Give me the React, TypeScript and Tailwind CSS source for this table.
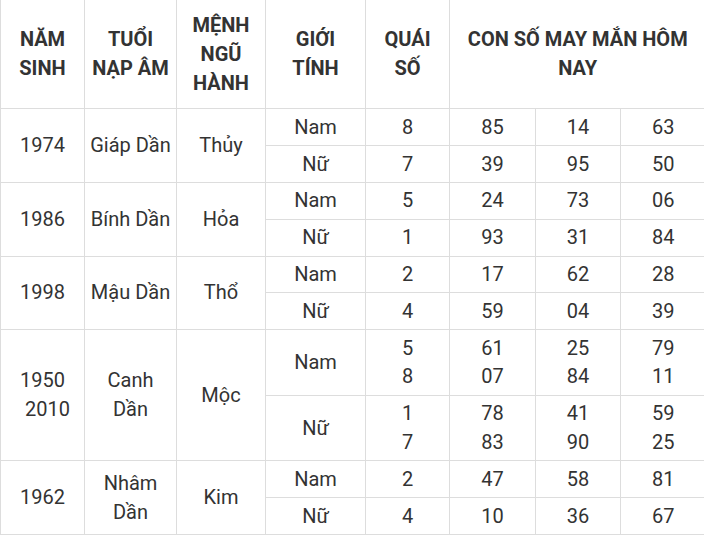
type Line = string[];

type Gender = {
  label: string;
  quai: Line;
  nums: [Line, Line, Line];
};

type Group = {
  year: Line;
  tuoi: Line;
  menh: string;
  nam: Gender;
  nu: Gender;
};

const groups: Group[] = [
  {
    year: ['1974'],
    tuoi: ['Giáp Dần'],
    menh: 'Thủy',
    nam: { label: 'Nam', quai: ['8'], nums: [['85'], ['14'], ['63']] },
    nu: { label: 'Nữ', quai: ['7'], nums: [['39'], ['95'], ['50']] },
  },
  {
    year: ['1986'],
    tuoi: ['Bính Dần'],
    menh: 'Hỏa',
    nam: { label: 'Nam', quai: ['5'], nums: [['24'], ['73'], ['06']] },
    nu: { label: 'Nữ', quai: ['1'], nums: [['93'], ['31'], ['84']] },
  },
  {
    year: ['1998'],
    tuoi: ['Mậu Dần'],
    menh: 'Thổ',
    nam: { label: 'Nam', quai: ['2'], nums: [['17'], ['62'], ['28']] },
    nu: { label: 'Nữ', quai: ['4'], nums: [['59'], ['04'], ['39']] },
  },
  {
    year: ['1950', '\u00a0\u00a02010'],
    tuoi: ['Canh', 'Dần'],
    menh: 'Mộc',
    nam: { label: 'Nam', quai: ['5', '8'], nums: [['61', '07'], ['25', '84'], ['79', '11']] },
    nu: { label: 'Nữ', quai: ['1', '7'], nums: [['78', '83'], ['41', '90'], ['59', '25']] },
  },
  {
    year: ['1962'],
    tuoi: ['Nhâm', 'Dần'],
    menh: 'Kim',
    nam: { label: 'Nam', quai: ['2'], nums: [['47'], ['58'], ['81']] },
    nu: { label: 'Nữ', quai: ['4'], nums: [['10'], ['36'], ['67']] },
  },
];

const headers: Line[] = [
  ['NĂM', 'SINH'],
  ['TUỔI', 'NẠP ÂM'],
  ['MỆNH', 'NGŨ', 'HÀNH'],
  ['GIỚI', 'TÍNH'],
  ['QUÁI', 'SỐ'],
];

function Lines({ lines }: { lines: Line }) {
  return (
    <>
      {lines.map((l, i) => (
        <span key={i} className="block whitespace-nowrap">
          {l}
        </span>
      ))}
    </>
  );
}

const td = 'border border-[#dddddd] px-0 py-[3.5px] text-center align-middle';
const th = 'border border-t-0 border-[#dddddd] px-0 pt-[11px] pb-[11px] text-center align-middle font-bold';

function GenderCells({ g }: { g: Gender }) {
  return (
    <>
      <td className={td}>{g.label}</td>
      <td className={td}>
        <Lines lines={g.quai} />
      </td>
      {g.nums.map((n, i) => (
        <td key={i} className={`${td} ${i === 2 ? 'border-r-0' : ''}`}>
          <Lines lines={n} />
        </td>
      ))}
    </>
  );
}

export default function App() {
  return (
    <div className="w-[704px] h-[535px] overflow-hidden bg-white">
      <table
        className="table-fixed border-collapse w-[705px] text-[20px] leading-[28.8px] text-[#333333]"
        style={{ fontFamily: 'Roboto, "Liberation Sans", sans-serif' }}
      >
        <colgroup>
          <col className="w-[84px]" />
          <col className="w-[92px]" />
          <col className="w-[89px]" />
          <col className="w-[100px]" />
          <col className="w-[84px]" />
          <col className="w-[86px]" />
          <col className="w-[85px]" />
          <col className="w-[85px]" />
        </colgroup>
        <thead>
          <tr>
            {headers.map((h, i) => (
              <th key={i} className={th}>
                <Lines lines={h} />
              </th>
            ))}
            <th colSpan={3} className={`${th} border-r-0`}>
              <Lines lines={['CON SỐ MAY MẮN HÔM', 'NAY']} />
            </th>
          </tr>
        </thead>
        <tbody>
          {groups.map((g, i) => (
            <>
              <tr key={`${i}a`}>
                <td rowSpan={2} className={td}>
                  <Lines lines={g.year} />
                </td>
                <td rowSpan={2} className={td}>
                  <Lines lines={g.tuoi} />
                </td>
                <td rowSpan={2} className={td}>
                  {g.menh}
                </td>
                <GenderCells g={g.nam} />
              </tr>
              <tr key={`${i}b`}>
                <GenderCells g={g.nu} />
              </tr>
            </>
          ))}
        </tbody>
      </table>
    </div>
  );
}
